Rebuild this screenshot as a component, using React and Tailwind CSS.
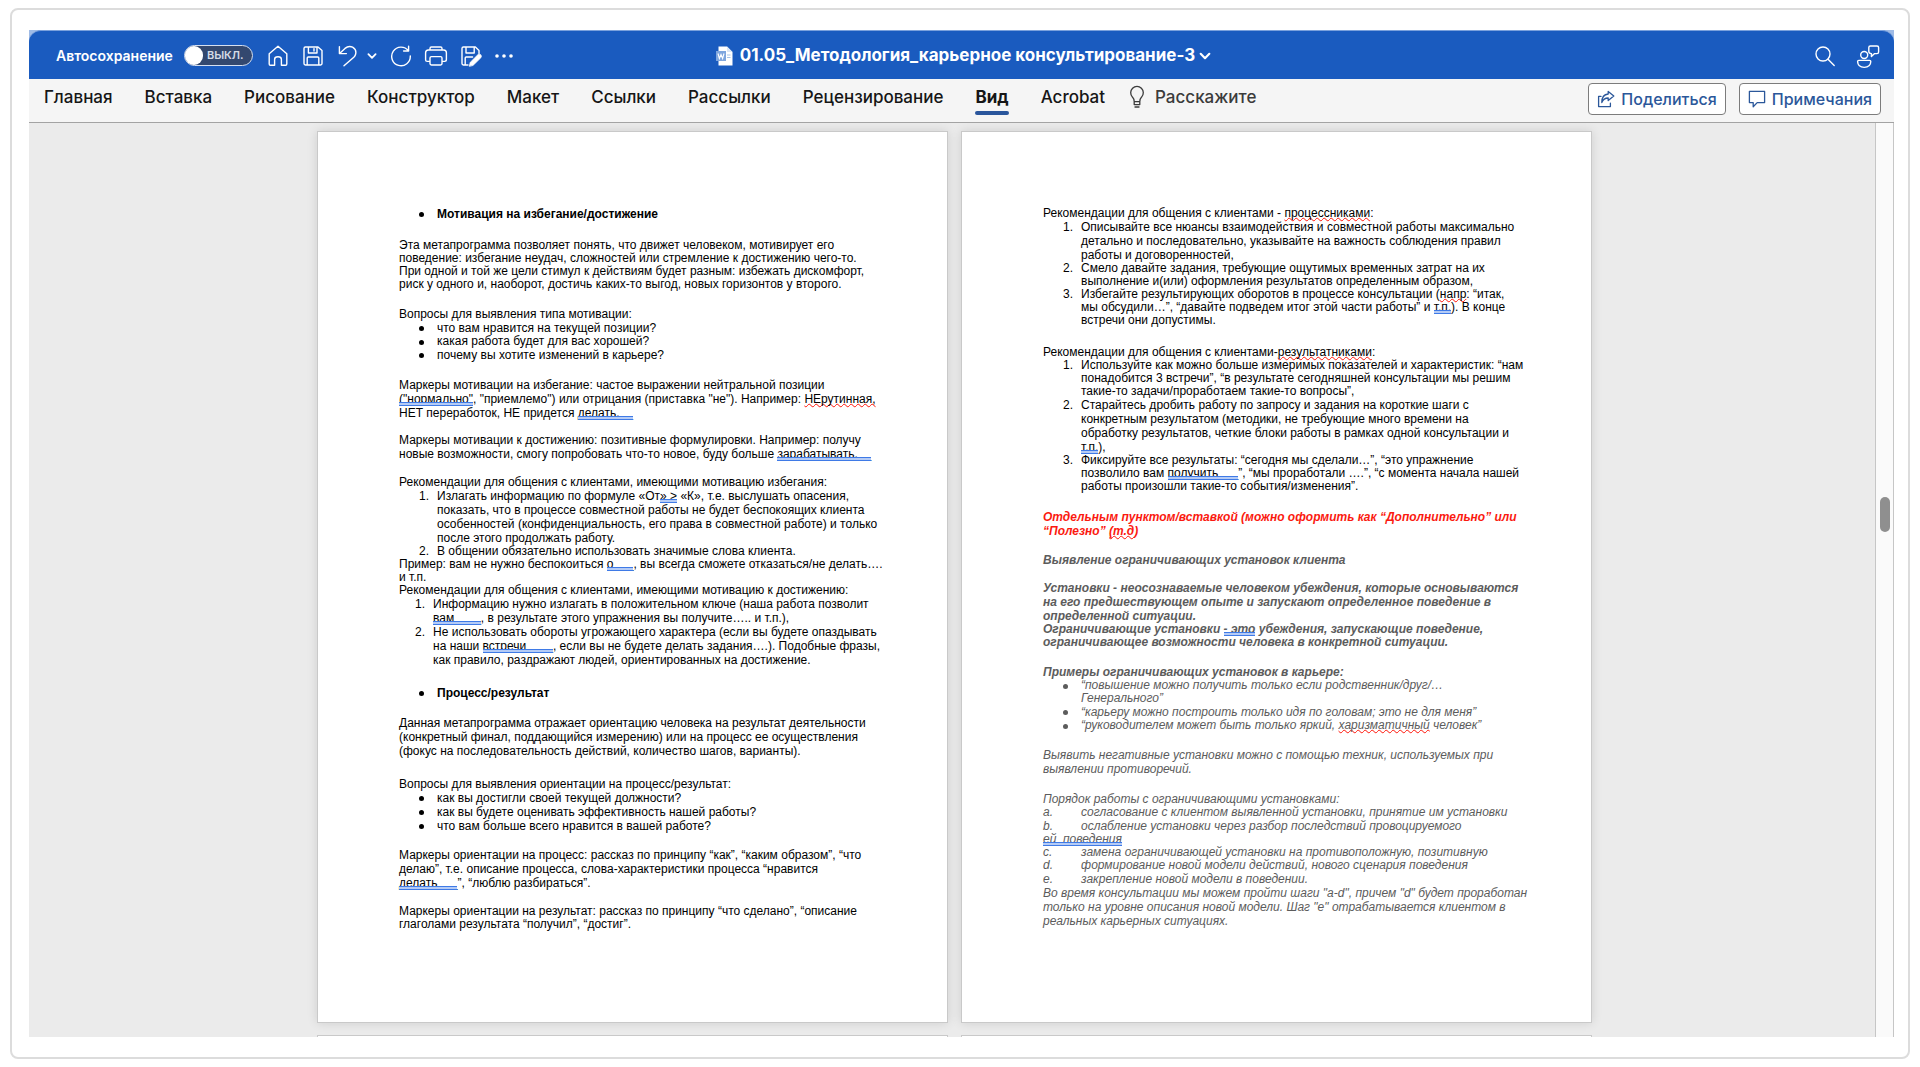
import React from "react";

const PAGE_FONT = "font-['Liberation_Sans',Arial,sans-serif]";

function Svg({ w = 22, h = 22, sw = 1.4, children, box = "0 0 22 22" }) {
  return (
    <svg width={w} height={h} viewBox={box} fill="none" stroke="currentColor" strokeWidth={sw} strokeLinejoin="round" strokeLinecap="round" aria-hidden="true" className="shrink-0">
      {children}
    </svg>
  );
}

const HomeIcon = () => (
  <Svg>
    <path d="M2.2 8.8 L11 1.2 L19.8 8.8 V19 Q19.8 20.2 18.6 20.2 H14.4 V14.4 Q14.4 11.8 11 11.8 Q7.6 11.8 7.6 14.4 V20.2 H3.4 Q2.2 20.2 2.2 19 Z" />
  </Svg>
);
const SaveIcon = () => (
  <Svg>
    <path d="M3.4 2 H16 L20 5.6 V18.6 Q20 20 18.6 20 H3.4 Q2 20 2 18.6 V3.4 Q2 2 3.4 2 Z M6.4 2.2 V8 H15 V2.2 M5.2 19.8 V13 Q5.2 12 6.2 12 H15.8 Q16.8 12 16.8 13 V19.8 M12 3.6 V6" />
  </Svg>
);
const UndoIcon = () => (
  <Svg>
    <path d="M2.4 1.6 V8.6 H9.4 M2.6 8.4 L8 3.4 Q11.6 .4 15.6 2.2 Q19.8 4.8 18.6 9.2 Q18.2 10.8 16.8 12.2 L7 20.8" />
  </Svg>
);
const RedoIcon = () => (
  <Svg>
    <path d="M18.6 1.2 V6 H13.6 M18.4 5.8 A9.3 9.3 0 1 0 20.3 11" />
  </Svg>
);
const PrintIcon = () => (
  <Svg w={24} box="0 0 24 22">
    <path d="M6 5 V3.4 Q6 2 7.4 2 H16.6 Q18 2 18 3.4 V5 M6 16.4 H3.4 Q1.6 16.4 1.6 14.6 V7.8 Q1.6 5 4.4 5 H19.6 Q22.4 5 22.4 7.8 V14.6 Q22.4 16.4 20.6 16.4 H18 M7.4 11.6 H16.6 Q18 11.6 18 13 V18.6 Q18 20 16.6 20 H7.4 Q6 20 6 18.6 V13 Q6 11.6 7.4 11.6 Z" />
  </Svg>
);
const SaveEditIcon = () => (
  <Svg>
    <path d="M8 20 H3.4 Q2 20 2 18.6 V3.4 Q2 2 3.4 2 H15.4 L19 5.4 V8.6 M6 2.2 V8 H14.2 V2.2 M5.2 19.8 V13 Q5.2 12 6.2 12 H12.6" />
    <path d="M9.4 21 L10.2 17.4 L17.8 9.8 Q19.6 8.6 20.8 9.8 Q22 11.4 20.8 12.8 L13.2 20.2 Z" fill="currentColor" strokeWidth="0.8" />
  </Svg>
);
const SearchIcon = () => (
  <Svg>
    <circle cx="9" cy="9" r="7" />
    <path d="M14 14.2 L20.2 20.4" />
  </Svg>
);
const PersonIcon = () => (
  <Svg w={24} h={26} box="0 0 24 26">
    <circle cx="8.2" cy="12" r="3.5" />
    <path d="M2.8 17.4 H13.6 Q14.8 17.4 14.8 18.6 Q14.6 24.4 8.2 24.4 Q1.8 24.4 1.6 18.6 Q1.6 17.4 2.8 17.4 Z" />
    <path d="M14.4 3 H21 Q22.6 3 22.6 4.6 V9 Q22.6 10.6 21 10.6 H18.6 L15.4 13.6 V10.6 Q12.8 10.4 12.8 8.6 V4.6 Q12.8 3 14.4 3 Z" />
  </Svg>
);
const BulbIcon = () => (
  <Svg w={16} h={24} sw={1.3} box="0 0 16 24">
    <path d="M5.2 16.6 Q5.2 13.8 3.4 12 A6.3 6.3 0 1 1 12.6 12 Q10.8 13.8 10.8 16.6 Z M5.2 16.6 V19.6 H10.8 V16.6 M6 22 H10" />
  </Svg>
);
const ShareIcon = () => (
  <Svg w={18} h={18} box="0 0 18 18" sw={1.3}>
    <path d="M4 6.4 H1.6 V16.6 H13.4 V13.2" />
    <path d="M11.2 1.4 L16.8 6 L11.2 10.6 V8 Q6.6 8 4.8 12.6 Q4.8 4.4 11.2 4 Z" />
  </Svg>
);
const CommentIcon = () => (
  <Svg w={18} h={18} box="0 0 18 18" sw={1.3}>
    <path d="M1.4 1.4 H16.6 V12.6 H9.2 L5.2 16.8 V12.6 H1.4 Z" />
  </Svg>
);
const Chevron = ({ size = 10 }) => (
  <Svg w={size} h={size} sw={1.8} box="0 0 10 10">
    <path d="M1.4 3.2 L5 6.8 L8.6 3.2" />
  </Svg>
);
const WordDocIcon = () => (
  <svg width="17" height="20" viewBox="0 0 17 20" aria-hidden="true" className="shrink-0">
    <path d="M2.5 .5 H11 L16.5 6 V19.5 H2.5 Z" fill="#fff" />
    <path d="M11 .5 L16.5 6 H11 Z" fill="#dbe6f6" />
    <rect x="0" y="5" width="10" height="10" fill="#7fa6de" />
    <path d="M2 7.5 L3.4 12.5 L5 8.5 L6.6 12.5 L8 7.5" fill="none" stroke="#fff" strokeWidth="1.1" />
    <path d="M11 9 H14.5 M11 11.5 H14.5" stroke="#a9c4e8" />
  </svg>
);

/* Double blue grammar mark, laid over the foot of the words */
const G = ({ children }) => (
  <span className="relative after:absolute after:inset-x-0 after:bottom-0 after:h-[4px] after:border-y after:border-[#3f7ae6] after:bg-[#b4cbf6] after:content-['']">
    {children}
  </span>
);
/* Red wavy spelling mark */
const S = ({ children }) => (
  <span className="underline decoration-[#ff1408] decoration-wavy decoration-[1px] underline-offset-0 [text-decoration-skip-ink:none]">
    {children}
  </span>
);

function Lines({ lines }) {
  return lines.map((line, i) => (
    <span key={i} className="block whitespace-nowrap">
      {line}
    </span>
  ));
}

function P({ className = "leading-[14px]", lines }) {
  return (
    <p className={className}>
      <Lines lines={lines} />
    </p>
  );
}

function Item({ mark, className = "leading-[14px]", indent = "pl-5", gap = "w-[18px]", lines }) {
  return (
    <li className={`flex ${indent} ${className}`}>
      <span className={`shrink-0 ${gap}`}>
        {mark === "•" ? <span className="mt-[5px] block h-[5px] w-[5px] rounded-full bg-current" /> : mark}
      </span>
      <div>
        <Lines lines={lines} />
      </div>
    </li>
  );
}

function Sheet({ children }) {
  return (
    <article className={`w-[631px] border border-[#c9c9c9] bg-white px-[81px] pt-[75px] text-xs text-black shadow-[0_0_10px_rgba(0,0,0,0.12)] ${PAGE_FONT}`}>
      {children}
    </article>
  );
}

function LeftPage() {
  return (
    <Sheet>
      <ul className="font-bold">
        <Item mark="•" lines={["Мотивация на избегание/достижение"]} />
      </ul>
      <P className="mt-[18px] leading-[13px]" lines={[
        "Эта метапрограмма позволяет понять, что движет человеком, мотивирует его",
        "поведение: избегание неудач, сложностей или стремление к достижению чего-то.",
        "При одной и той же цели стимул к действиям будет разным: избежать дискомфорт,",
        "риск у одного и, наоборот, достичь каких-то выгод, новых горизонтов у второго.",
      ]} />
      <P className="mt-[17px] leading-[13px]" lines={["Вопросы для выявления типа мотивации:"]} />
      <ul>
        <Item mark="•" lines={["что вам нравится на текущей позиции?"]} />
        <Item mark="•" className="leading-[13px]" lines={["какая работа будет для вас хорошей?"]} />
        <Item mark="•" lines={["почему вы хотите изменений в карьере?"]} />
      </ul>
      <P className="mt-4 leading-[14px]" lines={[
        "Маркеры мотивации на избегание: частое выражении нейтральной позиции",
        <><G>("нормально"</G>, "приемлемо") или отрицания (приставка "не"). Например: <S>НЕрутинная,</S></>,
        <>НЕТ переработок, НЕ придется <G>делать,__</G></>,
      ]} />
      <P className="mt-[13px] leading-[14px]" lines={[
        "Маркеры мотивации к достижению: позитивные формулировки. Например: получу",
        <>новые возможности, смогу попробовать что-то новое, буду больше <G>зарабатывать,__</G></>,
      ]} />
      <P className="mt-[15px] leading-[13px]" lines={["Рекомендации для общения с клиентами, имеющими мотивацию избегания:"]} />
      <ol>
        <Item mark="1." lines={[
          <>Излагать информацию по формуле «От<G>» &gt;</G> «К», т.е. выслушать опасения,</>,
          "показать, что в процессе совместной работы не будет беспокоящих клиента",
          "особенностей (конфиденциальность, его права в совместной работе) и только",
          "после этого продолжать работу.",
        ]} />
        <Item mark="2." className="leading-[13px]" lines={["В общении обязательно использовать значимые слова клиента."]} />
      </ol>
      <P className="leading-[13px]" lines={[
        <>Пример: вам не нужно беспокоиться <G>о___</G>, вы всегда сможете отказаться/не делать….</>,
        "и т.п.",
      ]} />
      <P className="leading-[13px]" lines={["Рекомендации для общения с клиентами, имеющими мотивацию к достижению:"]} />
      <ol>
        <Item mark="1." indent="pl-4" lines={[
          "Информацию нужно излагать в положительном ключе (наша работа позволит",
          <><G>вам____</G>, в результате этого упражнения вы получите….. и т.п.),</>,
        ]} />
        <Item mark="2." indent="pl-4" lines={[
          "Не использовать обороты угрожающего характера (если вы будете опаздывать",
          <>на наши <G>встречи____</G>, если вы не будете делать задания….). Подобные фразы,</>,
          "как правило, раздражают людей, ориентированных на достижение.",
        ]} />
      </ol>
      <ul className="mt-[19px] font-bold">
        <Item mark="•" lines={["Процесс/результат"]} />
      </ul>
      <P className="mt-[16px] leading-[14px]" lines={[
        "Данная метапрограмма отражает ориентацию человека на результат деятельности",
        "(конкретный финал, поддающийся измерению) или на процесс ее осуществления",
        "(фокус на последовательность действий, количество шагов, варианты).",
      ]} />
      <P className="mt-5 leading-[13px]" lines={["Вопросы для выявления ориентации на процесс/результат:"]} />
      <ul>
        <Item mark="•" lines={["как вы достигли своей текущей должности?"]} />
        <Item mark="•" lines={["как вы будете оценивать эффективность нашей работы?"]} />
        <Item mark="•" lines={["что вам больше всего нравится в вашей работе?"]} />
      </ul>
      <P className="mt-[15px] leading-[14px]" lines={[
        "Маркеры ориентации на процесс: рассказ по принципу “как”, “каким образом”, “что",
        "делаю”, т.е. описание процесса, слова-характеристики процесса “нравится",
        <><G>делать___</G>”, “люблю разбираться”.</>,
      ]} />
      <P className="mt-[15px] leading-[13px]" lines={[
        "Маркеры ориентации на результат: рассказ по принципу “что сделано”, “описание",
        "глаголами результата “получил”, “достиг”.",
      ]} />
    </Sheet>
  );
}

function RightPage() {
  return (
    <Sheet>
      <P className="leading-[13px]" lines={[<>Рекомендации для общения с клиентами - <S>процессниками</S>:</>]} />
      <ol>
        <Item mark="1." lines={[
          "Описывайте все нюансы взаимодействия и совместной работы максимально",
          "детально и последовательно, указывайте на важность соблюдения правил",
          "работы и договоренностей,",
        ]} />
        <Item mark="2." className="leading-[13px]" lines={[
          "Смело давайте задания, требующие ощутимых временных затрат на их",
          "выполнение и(или) оформления результатов определенным образом,",
        ]} />
        <Item mark="3." className="leading-[13px]" lines={[
          <>Избегайте результирующих оборотов в процессе консультации (<S>напр</S>: “итак,</>,
          <>мы обсудили…”, “давайте подведем итог этой части работы” и <G>т.п.</G>). В конце</>,
          "встречи они допустимы.",
        ]} />
      </ol>
      <P className="mt-[19px] leading-[13px]" lines={[<>Рекомендации для общения с клиентами-<S>результатниками</S>:</>]} />
      <ol>
        <Item mark="1." className="leading-[13px]" lines={[
          "Используйте как можно больше измеримых показателей и характеристик: “нам",
          "понадобится 3 встречи”, “в результате сегодняшней консультации мы решим",
          "такие-то задачи/проработаем такие-то вопросы”,",
        ]} />
        <Item mark="2." lines={[
          "Старайтесь дробить работу по запросу и задания на короткие шаги с",
          "конкретным результатом (методики, не требующие много времени на",
          "обработку результатов, четкие блоки работы в рамках одной консультации и",
          <><G>т.п.</G>),</>,
        ]} />
        <Item mark="3." className="leading-[13px]" lines={[
          "Фиксируйте все результаты: “сегодня мы сделали…”, “это упражнение",
          <>позволило вам <G>получить___</G>”, “мы проработали ….”, “с момента начала нашей</>,
          "работы произошли такие-то события/изменения”.",
        ]} />
      </ol>
      <P className="mt-[17px] font-bold italic leading-[14px] text-[#fb1a10]" lines={[
        "Отдельным пунктом/вставкой (можно оформить как “Дополнительно” или",
        <>“Полезно” <S>(т.д</S>)</>,
      ]} />
      <div className="italic text-[#5c5c5c]">
        <h3 className="mt-[15px] whitespace-nowrap font-bold leading-[14px]">Выявление ограничивающих установок клиента</h3>
        <P className="mt-[14px] font-bold leading-[14px]" lines={[
          "Установки - неосознаваемые человеком убеждения, которые основываются",
          "на его предшествующем опыте и запускают определенное поведение в",
          "определенной ситуации.",
        ]} />
        <P className="font-bold leading-[13px]" lines={[
          <>Ограничивающие установки <G>- это</G> убеждения, запускающие поведение,</>,
          "ограничивающее возможности человека в конкретной ситуации.",
        ]} />
        <P className="mt-[17px] font-bold leading-[13px]" lines={["Примеры ограничивающих установок в карьере:"]} />
        <ul>
          <Item mark="•" className="leading-[13px]" lines={["“повышение можно получить только если родственник/друг/…", "Генерального”"]} />
          <Item mark="•" className="leading-[14px]" lines={["“карьеру можно построить только идя по головам; это не для меня”"]} />
          <Item mark="•" className="leading-[13px]" lines={[<>“руководителем может быть только яркий, <S>харизматичный</S> человек”</>]} />
        </ul>
        <P className="mt-4 leading-[14px]" lines={[
          "Выявить негативные установки можно с помощью техник, используемых при",
          "выявлении противоречий.",
        ]} />
        <P className="mt-[17px] leading-[13px]" lines={["Порядок работы с ограничивающими установками:"]} />
        <ol>
          <Item mark="a." indent="pl-0" gap="w-[38px]" className="leading-[13px]" lines={["согласование с клиентом выявленной установки, принятие им установки"]} />
          <Item mark="b." indent="pl-0" gap="w-[38px]" lines={["ослабление установки через разбор последствий провоцируемого"]} />
          <li className="leading-[13px]"><G>ей&nbsp; поведения</G></li>
          <Item mark="c." indent="pl-0" gap="w-[38px]" className="leading-[13px]" lines={["замена ограничивающей установки на противоположную, позитивную"]} />
          <Item mark="d." indent="pl-0" gap="w-[38px]" className="leading-[13px]" lines={["формирование новой модели действий, нового сценария поведения"]} />
          <Item mark="e." indent="pl-0" gap="w-[38px]" className="leading-[14px]" lines={["закрепление новой модели в поведении."]} />
        </ol>
        <P className="leading-[14px]" lines={[
          "Во время консультации мы можем пройти шаги \"a-d\", причем \"d\" будет проработан",
          "только на уровне описания новой модели. Шаг \"e\" отрабатывается клиентом в",
          "реальных карьерных ситуациях.",
        ]} />
      </div>
    </Sheet>
  );
}

const TABS = ["Главная", "Вставка", "Рисование", "Конструктор", "Макет", "Ссылки", "Рассылки", "Рецензирование", "Вид", "Acrobat"];

function IconButton({ label, children }) {
  return (
    <button type="button" aria-label={label} className="flex shrink-0 items-center justify-center">
      {children}
    </button>
  );
}

function TitleBar() {
  return (
    <header className="grid h-[49px] grid-cols-[1fr_auto_1fr] items-center rounded-t-xl border-t border-[#7ba1dc] bg-[#1a5bbf] pl-[18px] pr-[14px] pt-px text-white">
      <div className="flex items-center pl-[9px]">
        <label htmlFor="autosave" className="text-sm font-semibold">Автосохранение</label>
        <button id="autosave" type="button" role="switch" aria-checked="false" className="ml-[11px] flex h-[21px] w-[69px] items-center rounded-full border border-[#d5dff0] bg-[#33486f] text-[11px] font-semibold text-[#d5dbe6]">
          <span className="mr-1 h-[19px] w-[18px] rounded-full bg-white" />
          ВЫКЛ.
        </button>
        <div className="ml-[14px] flex items-center gap-[13px]">
          <IconButton label="Домой"><HomeIcon /></IconButton>
          <IconButton label="Сохранить"><SaveIcon /></IconButton>
          <div className="flex items-center gap-2">
            <IconButton label="Отменить"><UndoIcon /></IconButton>
            <IconButton label="Варианты отмены"><Chevron size={10} /></IconButton>
          </div>
          <div className="flex items-center gap-3">
            <IconButton label="Повторить"><RedoIcon /></IconButton>
            <IconButton label="Печать"><PrintIcon /></IconButton>
            <IconButton label="Сохранить как"><SaveEditIcon /></IconButton>
            <IconButton label="Ещё">
              <svg width="20" height="6" viewBox="0 0 20 6" fill="currentColor" aria-hidden="true"><circle cx="3" cy="3" r="1.8" /><circle cx="10" cy="3" r="1.8" /><circle cx="17" cy="3" r="1.8" /></svg>
            </IconButton>
          </div>
        </div>
      </div>
      <button type="button" className="flex items-center gap-[7px] whitespace-nowrap text-[17px] font-bold">
        <WordDocIcon />
        <span className="flex items-center gap-1">01.05_Методология_карьерное консультирование-3<Chevron size={12} /></span>
      </button>
      <div className="flex items-center justify-end gap-5">
        <IconButton label="Поиск"><SearchIcon /></IconButton>
        <IconButton label="Совместная работа"><PersonIcon /></IconButton>
      </div>
    </header>
  );
}

function Ribbon() {
  return (
    <div className="flex h-[44px] items-start justify-between border-b border-[#a3a3a3] bg-[#f5f5f5] pl-[15px] pr-[13px]">
      <nav className="flex items-start gap-8 whitespace-nowrap pt-[6px] text-[17px] font-medium leading-6 text-[#161616]">
        {TABS.map((t) => (
          <a key={t} href="#" aria-current={t === "Вид" ? "page" : undefined} className={t === "Вид" ? "font-bold" : ""}>
            {t}
            {t === "Вид" && <span className="mt-[2px] block h-1 rounded-full bg-[#2a569c]" />}
          </a>
        ))}
        <button type="button" className="-ml-2 flex items-center gap-[10px] text-[#3b3b3b]">
          <BulbIcon />
          Расскажите
        </button>
      </nav>
      <div className="flex gap-[13px] pt-1 text-base font-medium text-[#2b579a]">
        <button type="button" className="flex h-8 items-center gap-[6px] rounded border border-[#7c7c7c] bg-white px-2"><ShareIcon />Поделиться</button>
        <button type="button" className="flex h-8 items-center gap-[6px] rounded border border-[#7c7c7c] bg-white px-2"><CommentIcon />Примечания</button>
      </div>
    </div>
  );
}

export default function App() {
  return (
    <div className="flex h-screen bg-white px-[10px] pb-2 pt-2 font-[Inter,Roboto,sans-serif]">
      <div className="flex flex-1 rounded-lg border-2 border-[#dcdcdc] pb-5 pl-[17px] pr-[14px] pt-5">
        <div className="flex min-w-0 flex-1 flex-col">
          <div className="bg-[#9fbbe6]"><TitleBar /></div>
          <Ribbon />
          <div className="flex min-h-0 flex-1 bg-[#ebebeb]">
            <main className="min-w-0 flex-1 overflow-hidden pl-[5px] pt-2">
              <div className="flex h-[892px] justify-center gap-[13px]">
                <LeftPage />
                <RightPage />
              </div>
              <div className="mt-3 flex justify-center gap-[13px]">
                <div className="h-10 w-[631px] border border-[#c9c9c9] bg-white" />
                <div className="h-10 w-[631px] border border-[#c9c9c9] bg-white" />
              </div>
            </main>
            <div className="w-[19px] border-x border-[#c6c6c6] bg-[#fafafa] pl-1 pt-[374px]">
              <div className="h-[35px] w-[10px] rounded-full bg-[#8f8f8f]" />
            </div>
          </div>
        </div>
      </div>
    </div>
  );
}
